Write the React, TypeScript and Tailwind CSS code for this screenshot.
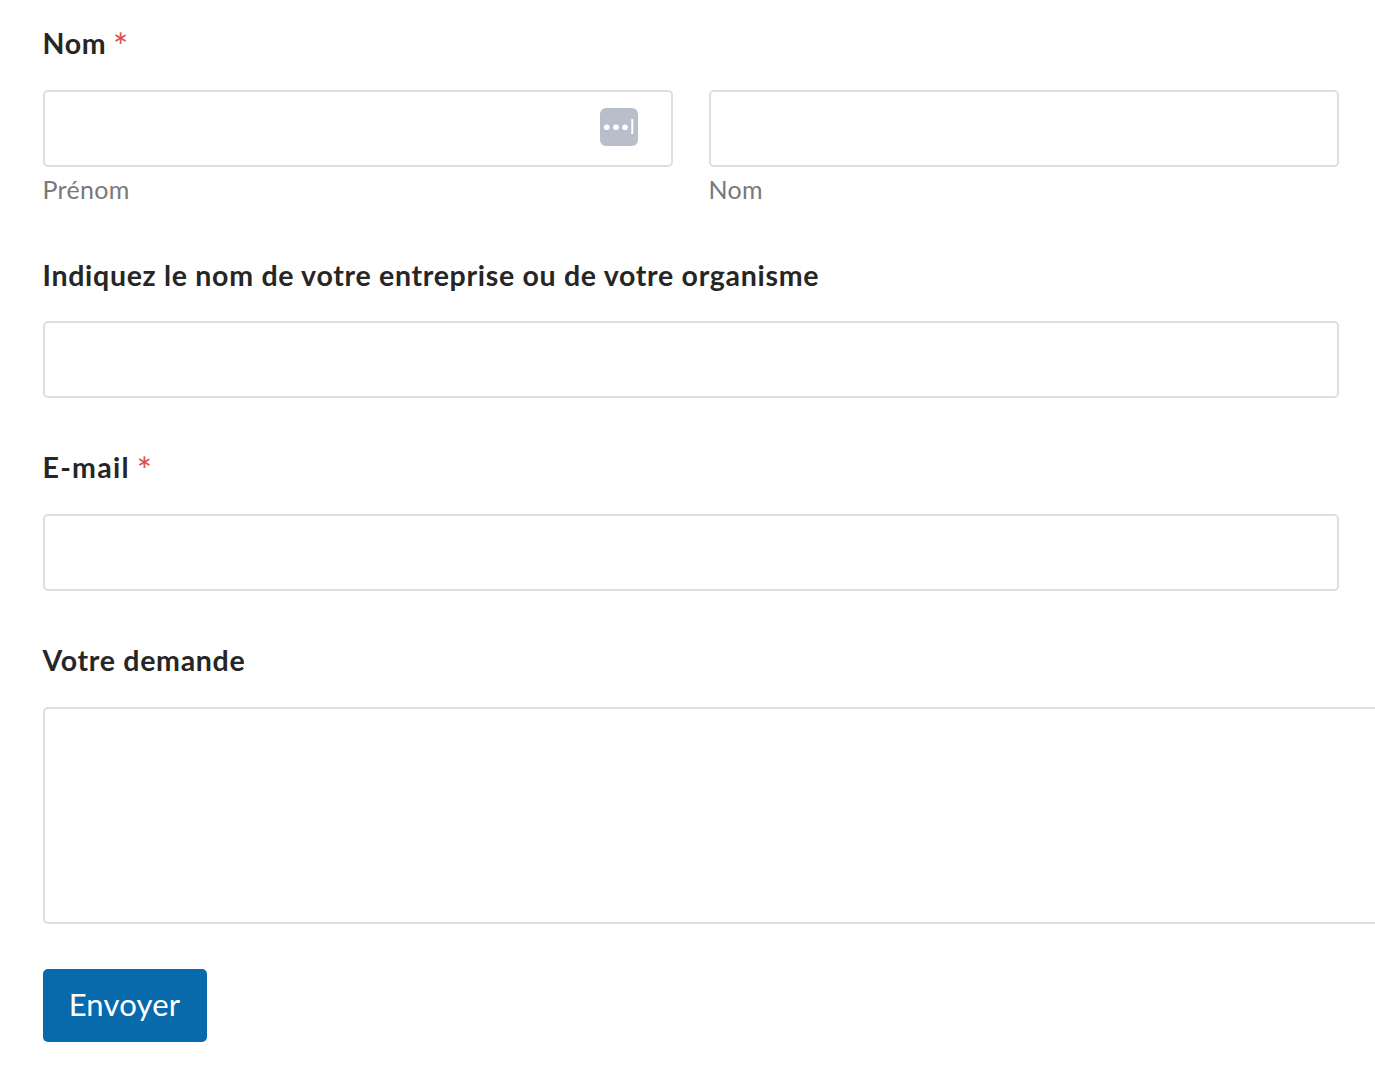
export default function App() {
  const label = "block h-[32px] text-[28.5px] leading-[32px] font-bold text-[#262626] tracking-[0.7px]";
  const input = "block w-full h-[77px] rounded-[5px] border-2 border-[#dedede] bg-white";
  const sub = "block mt-[6px] h-[32px] text-[25px] leading-[32px] tracking-[0.3px] text-[#77797c]";
  const star = "relative top-[6px] -ml-[1px] text-[36px] leading-[0] font-normal text-[#d9534f]";
  return (
    <div className="h-[1089px] w-[1375px] overflow-hidden bg-white pl-[42.5px] pr-[36.5px] pt-[27px] font-['Lato',sans-serif]">
      <div className="flex flex-col">
        <span className={label}>
          Nom <span className={star}>*</span>
        </span>
        <div className="mt-[31px] flex gap-[36px]">
          <div className="flex-1">
            <div className="relative">
              <input aria-label="Prénom" className={input} />
              <span className="absolute left-[557px] top-[18px] flex h-[38px] w-[38px] items-center justify-center rounded-[6px] bg-[#b8bfcb]">
                <svg width="32" height="22" viewBox="0 0 32 22" fill="none">
                  <circle cx="3.7" cy="11.3" r="2.8" fill="#fff" />
                  <circle cx="13" cy="11.3" r="2.8" fill="#fff" />
                  <circle cx="22" cy="11.3" r="2.8" fill="#fff" />
                  <rect x="28.3" y="3" width="2" height="15" fill="#fff" />
                </svg>
              </span>
            </div>
            <span className={sub}>Prénom</span>
          </div>
          <div className="flex-1">
            <input aria-label="Nom" className={input} />
            <span className={sub}>Nom</span>
          </div>
        </div>
        <span className={`${label} mt-[54px]`}>Indiquez le nom de votre entreprise ou de votre organisme</span>
        <input aria-label="Entreprise" className={`${input} mt-[30px]`} />
        <span className={`${label} mt-[53px]`}>
          <span className="tracking-[1.3px]">E-mail</span> <span className={star}>*</span>
        </span>
        <input aria-label="E-mail" className={`${input} mt-[31px]`} />
        <span className={`${label} mt-[53px]`}>Votre demande</span>
        <textarea aria-label="Votre demande" className="mt-[31px] block h-[217px] w-[1400px] max-w-none rounded-[5px] border-2 border-[#dedede] bg-white" />
        <button className="mt-[45px] h-[73px] w-[164px] rounded-[5px] bg-[#0869ab] pb-[3px] text-[31px] tracking-[0.2px] text-white">Envoyer</button>
      </div>
    </div>
  );
}
